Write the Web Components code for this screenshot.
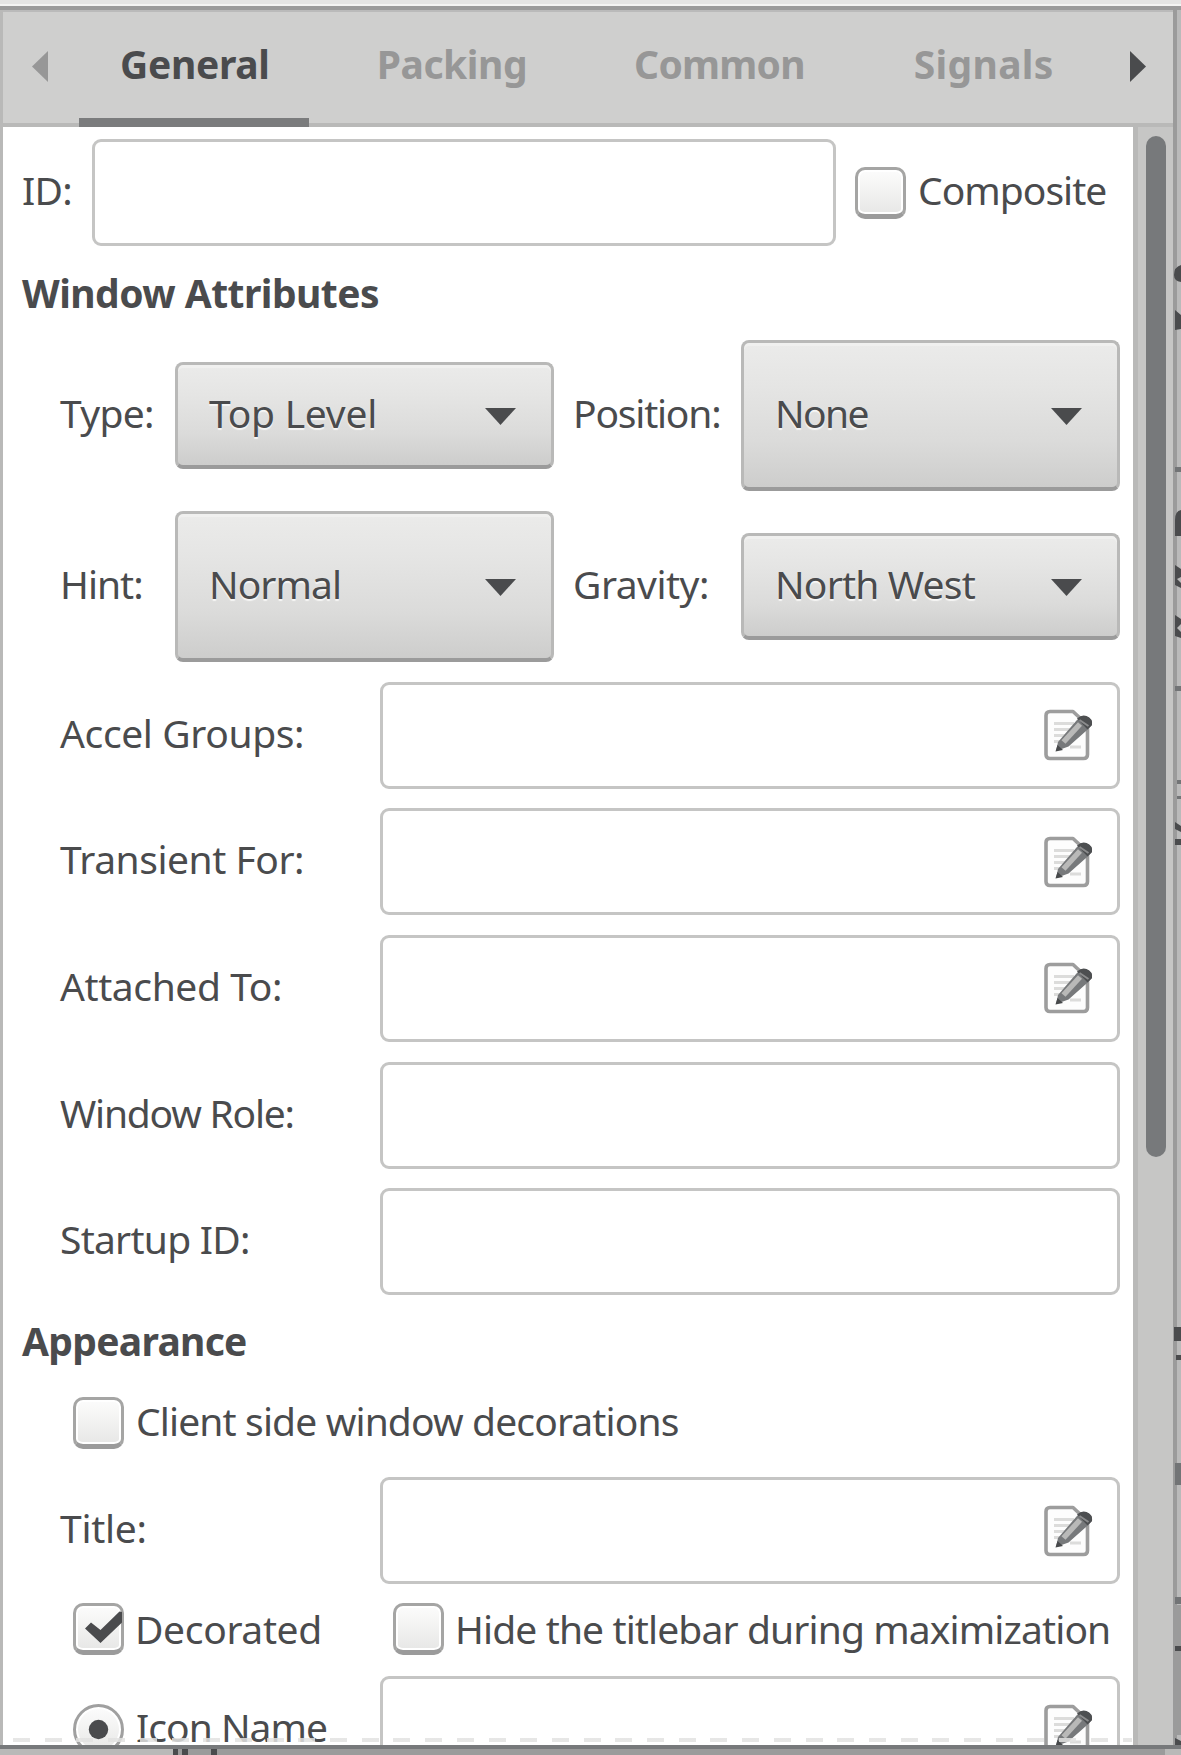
<!DOCTYPE html>
<html lang="en">
<head>
<meta charset="utf-8">
<title>Properties</title>
<style>
html,body{margin:0;height:1755px;overflow:hidden;background:#bababa}
body{font:39px/54px "Noto Sans","Open Sans",sans-serif;color:#4a4b4d}
</style>
</head>
<body>
<property-editor></property-editor>
<script>
const define=(name,html,setup)=>customElements.define(name,class extends HTMLElement{
  connectedCallback(){
    if(this.shadowRoot)return;
    const root=this.attachShadow({mode:'open'});
    root.innerHTML=html;
    if(setup)setup(this,root);
  }
});

/* text run with its own tracking */
define('ui-text',`<style>
:host{display:block;white-space:nowrap;line-height:54px;height:54px;padding-bottom:5px}
</style><slot></slot>`,el=>{el.style.letterSpacing=(el.getAttribute('track')||0)+'px'});

define('ui-heading',`<style>
:host{display:flex;align-items:center;height:42px;padding-left:19px;font-weight:700}
</style><slot></slot>`);

define('ui-tab',`<style>
:host{display:flex;align-items:center;box-sizing:border-box;height:117px;padding:5px 39px 0 41px;font-weight:700;color:#979797;border-bottom:9px solid transparent}
:host([active]){color:#4a4b4d;border-bottom-color:#7b7c7d}
</style><slot></slot>`);

define('ui-arrow',`<style>
:host{display:block;width:17px;height:31px}
svg{display:block}
:host([left]) svg{transform:scaleX(-1)}
</style><svg width="17" height="31" viewBox="0 0 17 31"><path d="M1 0v31L17 15.500z" fill="currentColor"/></svg>`);

define('edit-icon',`<style>:host{display:block}svg{display:block}</style>
<svg width="52" height="54" viewBox="0 0 52 54">
<path d="M7 3.500H30L44.500 17V46.500Q44.500 50.500 40.500 50.500H7Q3 50.500 3 46.500V7.500Q3 3.500 7 3.500z" fill="#fdfdfd" stroke="#9d9d9d" stroke-width="3.600" stroke-linejoin="round"/>
<path d="M11 15.500H31M11 21.500H27M11 27.500H23M11 33.500H18M27 39H38" stroke="#dcdcdb" stroke-width="3"/>
<path d="M15 34L33.500 12.500Q38 7 43.500 8.500Q50 11 49 17L43 23L25.500 38.500L13 43z" fill="#77797b"/>
<path d="M20.500 34L37 16" stroke="#b9b9b8" stroke-width="5.500"/>
<path d="M34 10.500Q39 6 43.500 8Q50 10.500 49 17L44.500 21.500z" fill="#4d4f51"/>
<path d="M36.500 12L45.500 18" stroke="#8b8c8d" stroke-width="2"/>
<path d="M14.500 37L20 42L12.500 43.500z" fill="#47494b"/>
</svg>`);

define('ui-entry',`<style>
:host{display:flex;align-items:center;justify-content:flex-end;box-sizing:border-box;height:107px;border:3px solid #c5c5c4;border-radius:9px;background:#fff;padding-right:22px}
:host(:not([editable])) edit-icon{display:none}
</style><edit-icon></edit-icon>`);

define('ui-combo',`<style>
:host{display:flex;align-items:center;justify-content:space-between;box-sizing:border-box;height:107px;border:3px solid #b9b9b8;border-bottom:4px solid #9b9b9b;border-radius:8px;background:linear-gradient(#ebebea,#e5e5e4 30%,#dbdbda 68%,#cdcdcc);box-shadow:inset 0 3px 0 #f0f0ef;padding:1px 35px 0 31px;text-shadow:0 2px 1px #f6f6f5}
:host([tall]){height:151px}
svg{display:block;margin-top:1px}
</style><slot></slot><svg width="31" height="17" viewBox="0 0 31 17"><path d="M0 0H31L15.500 17z" fill="#4a4b4d"/></svg>`);

define('ui-check',`<style>
:host{display:flex;align-items:center;gap:12px}
.box{display:block;flex:none;box-sizing:border-box;width:51px;height:52px;border:3px solid #a5a5a4;border-bottom:5px solid #9b9b9b;border-radius:10px;background:linear-gradient(#fcfcfc,#f2f2f1 50%,#e7e7e6);box-shadow:inset 0 0 0 2px #fff}
svg{display:none;margin:0}
:host([radio]) .box{border-radius:50%;border:3px solid #a0a0a0;height:51px}
:host([checked]:not([radio])) .tick{display:block}
:host([radio]) .dot{display:block}
</style><span class="box"><svg class="tick" width="46" height="44" viewBox="0 0 46 44"><path d="M9 22.500L15 16.500L24.500 24L43.500 5.500L46 6V16.500L24.500 37z" fill="#4a4b4d"/></svg><svg class="dot" width="45" height="45" viewBox="0 0 45 45"><circle cx="22.500" cy="22.500" r="9.700" fill="#4a4b4d"/></svg></span><slot></slot>`);

/* a label in the left column and an editor in the right one */
define('ui-field',`<style>
:host{display:grid;grid-template-columns:320px 740px;align-items:center;padding-left:57px}
</style><slot></slot>`);

define('ui-scrollbar',`<style>
:host{display:block;box-sizing:border-box;width:40px;border-left:5px solid #b9b9b8;background:#c6c6c5;padding:9px 0 0 8px}
div{width:20px;height:1021px;border-radius:10px;background:#77797b}
</style><div></div>`);

/* slice of the neighbouring window seen past the right edge */
define('window-edge',`<style>
:host{display:block}svg{display:block}
</style><svg width="8" height="1745" viewBox="0 10 8 1745">
<path d="M0 0H8V1755H0z" fill="#bababa"/><path d="M0 0H4V1755H0z" fill="#9b9b9b"/>
<path d="M8 265Q1 267 1 275Q1 281 8 282zM2 310L8 315V329L2 330zM8 510Q2 511 2 520V536H8zM2 565L8 569V577L4 579L8 583V588L2 585zM2 615L8 619V624L4 628L8 632V638L2 636zM2 822L8 826V832L2 829zM2 839H8V845H2zM1 1327H8V1341H1zM3 1355H8V1360H3z" fill="#4a4b4d"/>
<path d="M2 467H8V472H2zM2 686H8V691H2zM4 780H8V784H4zM4 796H8V799H4zM2 1463H8V1485H2zM2 1597H8V1604H2z" fill="#727476"/>
<path d="M2 1605H8V1735H2z" fill="#9b9b9b"/><path d="M2 1646H8V1651H2zM2 1738L8 1741V1745H2z" fill="#4a4b4d"/>
</svg>`);

define('tab-strip',`<style>
:host{display:flex;justify-content:space-between;box-sizing:border-box;height:117px;background:#cfcfce;background-image:linear-gradient(#bababa 0 2px,transparent 2px calc(100% - 4px),#b9b9b8 calc(100% - 4px));padding:0 27px 0 29px}
.row{display:flex;gap:27px}
ui-arrow{margin-top:41px;color:#979797}
ui-arrow.next{color:#4a4b4d}
.wrap{flex:1;padding-left:30px}
</style><ui-arrow left></ui-arrow><div class="wrap"><div class="row">
<ui-tab active><ui-text track="-.3">General</ui-text></ui-tab>
<ui-tab><ui-text track="-.45">Packing</ui-text></ui-tab>
<ui-tab><ui-text track="-.75">Common</ui-text></ui-tab>
<ui-tab><ui-text track=".3" style="padding-left:2px">Signals</ui-text></ui-tab>
</div></div><ui-arrow class="next"></ui-arrow>`);

define('general-page',`<style>
:host{display:block;background:#fff;overflow:hidden}
.id{display:grid;grid-template-columns:70px 744px 1fr;align-items:center;padding:12px 0 0 19px}
.id ui-check{padding-left:19px}
.attrs{display:grid;grid-template-columns:115px 379px 187px 379px;row-gap:20px;align-items:center;padding-left:57px;margin:24px 0 19.500px}
.attrs .second{padding-left:19px}
.fields{display:flex;flex-direction:column;gap:19.700px}
.first{margin-top:28px}.look{margin-top:27px}
.csd{margin:33px 0 28px 70px}
.pair{display:grid;grid-template-columns:320px 1fr;padding-left:70px;margin:19px 0 21px}
.pair ui-text{padding-bottom:1px}
.icon{padding-left:70px;grid-template-columns:307px 740px}
ui-check.near{gap:11px}
ui-check.row{height:52px}
</style>
<div class="id"><ui-text track="-.7">ID:</ui-text><ui-entry></ui-entry><ui-check><ui-text track="-.98">Composite</ui-text></ui-check></div>
<ui-heading class="first"><ui-text track="-.54">Window Attributes</ui-text></ui-heading>
<div class="attrs">
<ui-text track="-.7">Type:</ui-text><ui-combo><ui-text track="-.25">Top Level</ui-text></ui-combo>
<ui-text class="second" track="-1.2">Position:</ui-text><ui-combo tall><ui-text track="-1.6">None</ui-text></ui-combo>
<ui-text track="-1">Hint:</ui-text><ui-combo tall><ui-text track="-.95">Normal</ui-text></ui-combo>
<ui-text class="second" track="-.5">Gravity:</ui-text><ui-combo><ui-text track="-.8">North West</ui-text></ui-combo>
</div>
<div class="fields">
<ui-field><ui-text track="-.38">Accel Groups:</ui-text><ui-entry editable></ui-entry></ui-field>
<ui-field><ui-text track="-.46">Transient For:</ui-text><ui-entry editable></ui-entry></ui-field>
<ui-field><ui-text track="-.41">Attached To:</ui-text><ui-entry editable></ui-entry></ui-field>
<ui-field><ui-text track="-1.22">Window Role:</ui-text><ui-entry></ui-entry></ui-field>
<ui-field><ui-text track="-.75">Startup ID:</ui-text><ui-entry></ui-entry></ui-field>
</div>
<ui-heading class="look"><ui-text track="-.7">Appearance</ui-text></ui-heading>
<ui-check class="csd row"><ui-text track="-.86">Client side window decorations</ui-text></ui-check>
<ui-field><ui-text track="-.3">Title:</ui-text><ui-entry editable></ui-entry></ui-field>
<div class="pair"><ui-check checked class="near row"><ui-text track="-.35">Decorated</ui-text></ui-check><ui-check class="near row"><ui-text track="-.88">Hide the titlebar during maximization</ui-text></ui-check></div>
<ui-field class="icon"><ui-check radio><ui-text track="-.97">Icon Name</ui-text></ui-check><ui-entry editable></ui-entry></ui-field>`);

define('property-editor',`<style>
:host{display:block;position:relative;width:1181px;height:1755px;overflow:hidden}
.top{height:6px;background:linear-gradient(#e5e5e4 0 4px,#f4f4f3 4px)}
.rule{height:4px;background:#9b9b9b}
.main{display:grid;grid-template-columns:3px 1170px 8px;height:1745px}
.left{background:#b9b9b8}
.window{display:flex;flex-direction:column;height:1745px;overflow:hidden}
.body{display:grid;grid-template-columns:1130px 40px;height:1628px}
window-edge{height:1745px}
.status{position:absolute;left:0;right:0;bottom:0;height:10px;box-sizing:border-box;border-top:4px solid #77797b;background:linear-gradient(90deg,#b9b9b8 0 173px,#4a4b4d 173px 178px,#9b9b9b 178px 182px,#4a4b4d 182px 188px,#9b9b9b 188px 211px,#4a4b4d 211px 217px,#9b9b9b 217px 1165px,#b9b9b8 1165px)}
.dashes{position:absolute;left:13px;width:1119px;top:1738px;height:4px;opacity:.85;background:repeating-linear-gradient(90deg,#e2e2e1 0 17px,transparent 17px 31.700px)}
</style>
<div class="top"></div><div class="rule"></div>
<div class="main"><div class="left"></div>
<div class="window"><tab-strip></tab-strip><div class="body"><general-page></general-page><ui-scrollbar></ui-scrollbar></div></div>
<window-edge></window-edge></div>
<div class="dashes"></div><div class="status"></div>`);
</script>
</body>
</html>
